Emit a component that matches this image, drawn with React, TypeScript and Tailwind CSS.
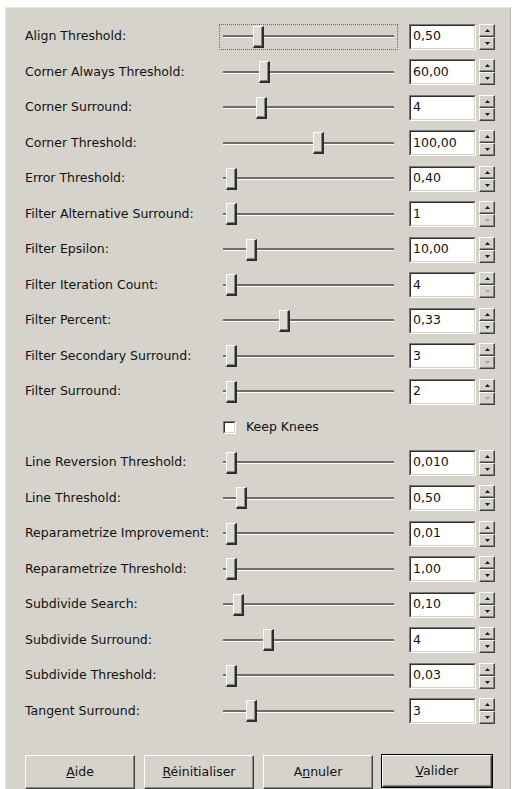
import React from "react";

type Row = { label: string; value: string; thumb: number; downOff?: boolean; focus?: boolean };

const rows: (Row | "knees")[] = [
  { label: "Align Threshold:", value: "0,50", thumb: 257, focus: true },
  { label: "Corner Always Threshold:", value: "60,00", thumb: 263 },
  { label: "Corner Surround:", value: "4", thumb: 260 },
  { label: "Corner Threshold:", value: "100,00", thumb: 317 },
  { label: "Error Threshold:", value: "0,40", thumb: 230 },
  { label: "Filter Alternative Surround:", value: "1", thumb: 230, downOff: true },
  { label: "Filter Epsilon:", value: "10,00", thumb: 250 },
  { label: "Filter Iteration Count:", value: "4", thumb: 230, downOff: true },
  { label: "Filter Percent:", value: "0,33", thumb: 283 },
  { label: "Filter Secondary Surround:", value: "3", thumb: 230, downOff: true },
  { label: "Filter Surround:", value: "2", thumb: 230, downOff: true },
  "knees",
  { label: "Line Reversion Threshold:", value: "0,010", thumb: 230 },
  { label: "Line Threshold:", value: "0,50", thumb: 240 },
  { label: "Reparametrize Improvement:", value: "0,01", thumb: 230 },
  { label: "Reparametrize Threshold:", value: "1,00", thumb: 230 },
  { label: "Subdivide Search:", value: "0,10", thumb: 237 },
  { label: "Subdivide Surround:", value: "4", thumb: 267 },
  { label: "Subdivide Threshold:", value: "0,03", thumb: 230 },
  { label: "Tangent Surround:", value: "3", thumb: 250 },
];

function Arrow({ up, off }: { up: boolean; off?: boolean }) {
  return (
    <svg width="5" height="3" viewBox="0 0 5 3" className="block">
      {up ? (
        <polygon points="2.5,0 5,3 0,3" fill={off ? "#a8a6a2" : "#1a1a1a"} />
      ) : (
        <polygon points="0,0 5,0 2.5,3" fill={off ? "#a8a6a2" : "#1a1a1a"} />
      )}
    </svg>
  );
}

function Slider({ thumb, focus }: { thumb: number; focus?: boolean }) {
  const left = thumb - 5.5 - 218;
  return (
    <div
      className={
        "relative w-[179px] h-[26px] flex items-center px-[3px] " +
        (focus ? "border border-dotted border-[#6a6864]" : "border border-transparent")
      }
    >
      <div className="w-full h-[3px] bg-[#6f6d69] border-b border-b-white" />
      <div
        className="absolute top-[1px] w-[11px] h-[22px] bg-[#dedbd5] border-t border-l border-t-white border-l-white border-r-2 border-b-2 border-r-[#2e2e2e] border-b-[#2e2e2e] shadow-[inset_-1px_-1px_0_#8a8884]"
        style={{ left: left - 1 }}
      />
    </div>
  );
}

function Spin({ value, downOff }: { value: string; downOff?: boolean }) {
  return (
    <div className="flex items-center gap-[3px]">
      <div className="w-[67px] h-[26px] border border-t-[#7a7874] border-l-[#7a7874] border-r-white border-b-white">
        <div className="w-full h-full bg-white border border-t-[#303030] border-l-[#303030] border-r-[#d6d3cd] border-b-[#d6d3cd] flex items-center pl-[2px] text-[12.5px] text-[#111]">
          {value}
        </div>
      </div>
      <div className="w-[16px] h-[26px] flex flex-col">
        <div className="h-[13px] flex items-center justify-center bg-[#d6d3cd] border-t border-l border-t-white border-l-white border-r border-b border-r-[#404040] border-b-[#404040] shadow-[inset_-1px_-1px_0_#8a8884]">
          <Arrow up />
        </div>
        <div className="h-[13px] flex items-center justify-center bg-[#d6d3cd] border-t border-l border-t-white border-l-white border-r border-b border-r-[#404040] border-b-[#404040] shadow-[inset_-1px_-1px_0_#8a8884]">
          <Arrow up={false} off={downOff} />
        </div>
      </div>
    </div>
  );
}

function Btn({ children, def }: { children: React.ReactNode; def?: boolean }) {
  const inner = (
    <div className="w-full h-full flex items-center justify-center bg-[#d6d3cd] border-t border-l border-t-white border-l-white border-r border-b border-r-[#404040] border-b-[#404040] shadow-[inset_-1px_-1px_0_#8a8884] text-[12.5px] text-[#111]">
      {children}
    </div>
  );
  return def ? (
    <div className="w-[112px] h-[34px] border border-black">{inner}</div>
  ) : (
    <div className="w-[110px] h-[34px]">{inner}</div>
  );
}

export default function App() {
  return (
    <div
      className="w-[515px] h-[789px] bg-white pt-[7px] pl-[5px] pr-[4px] overflow-hidden"
      style={{ fontFamily: '"DejaVu Sans", Verdana, sans-serif' }}
    >
      <div className="h-[800px] bg-[#d6d3cd] border-t border-l border-t-[#ebe9e5] border-l-[#ebe9e5] border-r border-r-[#b9b6b1] pt-[11px] flex flex-col">
        {rows.map((r, i) =>
          r === "knees" ? (
            <div key={i} className="h-[35.5px] flex items-center pl-[19px]">
              <div className="w-[194px]" />
              <div className="flex items-center pl-[4px] gap-[10px]">
                <div className="w-[13px] h-[13px] border border-t-[#7a7874] border-l-[#7a7874] border-r-white border-b-white">
                  <div className="w-full h-full bg-white border border-t-[#303030] border-l-[#303030] border-r-[#d6d3cd] border-b-[#d6d3cd]" />
                </div>
                <span className="text-[12.5px] text-[#111]">Keep Knees</span>
              </div>
            </div>
          ) : (
            <div key={i} className="h-[35.5px] flex items-center pl-[19px]">
              <div className="w-[194px] text-[12.5px] text-[#111] whitespace-nowrap">{r.label}</div>
              <Slider thumb={r.thumb} focus={r.focus} />
              <div className="w-[11px]" />
              <Spin value={r.value} downOff={r.downOff} />
            </div>
          )
        )}
        <div className="mt-[26px] pl-[19px] flex items-start gap-[9px]">
          <Btn>
            <span><span className="underline">A</span>ide</span>
          </Btn>
          <Btn>
            <span><span className="underline">R</span>éinitialiser</span>
          </Btn>
          <Btn>
            <span>A<span className="underline">n</span>nuler</span>
          </Btn>
          <div className="-mt-[1px] -ml-[1px]">
            <Btn def>
              <span><span className="underline">V</span>alider</span>
            </Btn>
          </div>
        </div>
      </div>
    </div>
  );
}
